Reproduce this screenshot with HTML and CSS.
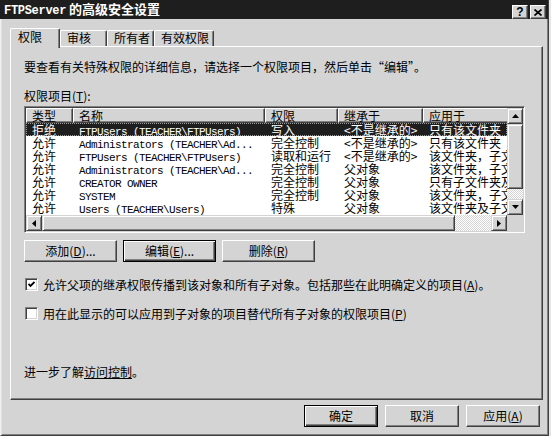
FILE: index.html
```html
<!DOCTYPE html>
<html lang="zh-CN">
<head>
<meta charset="utf-8">
<link rel="stylesheet" href="styles.css">
</head>
<body>
<div class="window">
  <div class="titlebar">
    <span class="title"><span class="title-lat">FTPServer</span> 的高级安全设置</span>
    <div class="tbtns">
      <span class="tbtn q">?</span>
      <span class="tbtn"><svg width="8" height="7" viewBox="0 0 8 7"><path d="M0.5 0.5 L7.5 6.5 M7.5 0.5 L0.5 6.5" stroke="#000" stroke-width="1.7"/></svg></span>
    </div>
  </div>

  <div class="tabs">
    <div class="tab active">权限</div>
    <div class="tab w47">审核</div>
    <div class="tab w47">所有者</div>
    <div class="tab w60">有效权限</div>
  </div>

  <div class="panel">
    <div class="intro">要查看有关特殊权限的详细信息，请选择一个权限项目，然后单击“编辑”。</div>
    <div class="label">权限项目(<u>T</u>):</div>

    <div class="listbox">
      <div class="lv-main">
        <div class="hdr">
          <div class="hc">类型</div>
          <div class="hc">名称</div>
          <div class="hc">权限</div>
          <div class="hc">继承于</div>
          <div class="hc">应用于</div>
        </div>
        <div class="rows">
          <div class="row sel"><div>拒绝</div><div><span class="mono">FTPUsers (TEACHER\FTPUsers)</span></div><div>写入</div><div>&lt;不是继承的&gt;</div><div>只有该文件夹</div></div>
          <div class="row"><div>允许</div><div><span class="mono">Administrators (TEACHER\Ad...</span></div><div>完全控制</div><div>&lt;不是继承的&gt;</div><div>只有该文件夹</div></div>
          <div class="row"><div>允许</div><div><span class="mono">FTPUsers (TEACHER\FTPUsers)</span></div><div>读取和运行</div><div>&lt;不是继承的&gt;</div><div>该文件夹，子文件夹及文件</div></div>
          <div class="row"><div>允许</div><div><span class="mono">Administrators (TEACHER\Ad...</span></div><div>完全控制</div><div>父对象</div><div>该文件夹，子文件夹及文件</div></div>
          <div class="row"><div>允许</div><div><span class="mono">CREATOR OWNER</span></div><div>完全控制</div><div>父对象</div><div>只有子文件夹及文件</div></div>
          <div class="row"><div>允许</div><div><span class="mono">SYSTEM</span></div><div>完全控制</div><div>父对象</div><div>该文件夹，子文件夹及文件</div></div>
          <div class="row"><div>允许</div><div><span class="mono">Users (TEACHER\Users)</span></div><div>特殊</div><div>父对象</div><div>该文件夹及子文件夹</div></div>
          <div class="row"><div>允许</div><div><span class="mono">Users (TEACHER\Users)</span></div><div>读取和运行</div><div>父对象</div><div>该文件夹，子文件夹及文件</div></div>
        </div>
      </div>
      <div class="vscroll">
        <div class="sbtn"><svg width="7" height="4" viewBox="0 0 7 4"><polygon points="0,4 3.5,0 7,4" fill="#000"/></svg></div>
        <div class="vthumb"></div>
        <div class="track"></div>
        <div class="sbtn"><svg width="7" height="4" viewBox="0 0 7 4"><polygon points="0,0 7,0 3.5,4" fill="#000"/></svg></div>
      </div>
      <div class="hscroll">
        <div class="sbtn"><svg width="4" height="7" viewBox="0 0 4 7"><polygon points="4,0 4,7 0,3.5" fill="#000"/></svg></div>
        <div class="hthumb"></div>
        <div class="track"></div>
        <div class="sbtn"><svg width="4" height="7" viewBox="0 0 4 7"><polygon points="0,0 4,3.5 0,7" fill="#000"/></svg></div>
      </div>
      <div class="corner"></div>
    </div>

    <div class="btnrow">
      <div class="btn w93">添加(<u>D</u>)...</div>
      <div class="btn w93 default">编辑(<u>E</u>)...</div>
      <div class="btn w93">删除(<u>R</u>)</div>
    </div>

    <div class="check first">
      <span class="box"><svg width="7" height="7" viewBox="0 0 7 7"><polyline points="0.5,3 2.5,5 6.5,1" fill="none" stroke="#000" stroke-width="1.8"/></svg></span>
      <span>允许父项的继承权限传播到该对象和所有子对象。包括那些在此明确定义的项目(<u>A</u>)。</span>
    </div>
    <div class="check second">
      <span class="box"></span>
      <span>用在此显示的可以应用到子对象的项目替代所有子对象的权限项目(<u>P</u>)</span>
    </div>

    <div class="more">进一步了解<u>访问控制</u>。</div>
  </div>

  <div class="footer">
    <div class="btn w74 default">确定</div>
    <div class="btn w74">取消</div>
    <div class="btn w74">应用(<u>A</u>)</div>
  </div>
</div>
</body>
</html>
```

FILE: styles.css
```css
* { box-sizing: border-box; }
html, body { margin: 0; padding: 0; }
body {
  width: 551px;
  height: 436px;
  overflow: hidden;
  background: #e6e6e6;
  font-family: "Noto Sans CJK SC", "Liberation Sans", sans-serif;
  font-size: 12px;
  color: #000;
}
.window {
  width: 549px;
  height: 436px;
  background: #d4d4d4;
  border-left: 1px solid #f0f0f0;
  border-right: 1px solid #404040;
  border-bottom: 1px solid #404040;
  box-shadow: inset 1px 0 #e0e0e0, inset -1px -1px #808080;
  display: flex;
  flex-direction: column;
}
.titlebar {
  height: 19px;
  margin-left: -1px;
  background: #1e1e1e;
  color: #fff;
  display: flex;
  align-items: center;
  justify-content: space-between;
  padding: 1px 2px 0 4px;
}
.title {
  font-weight: bold;
  font-size: 13px;
  line-height: 16px;
  white-space: nowrap;
}
.title-lat {
  font-family: "Liberation Mono", monospace;
  font-size: 12px;
  letter-spacing: -0.3px;
}
.tbtns { display: flex; gap: 2px; margin-top: 4px; }
.tbtn {
  width: 16px;
  height: 14px;
  background: #d4d4d4;
  border: 1px solid;
  border-color: #fff #404040 #404040 #fff;
  box-shadow: inset -1px -1px #808080;
  display: flex;
  align-items: center;
  justify-content: center;
  color: #000;
}
.tbtn.q {
  font-family: "Liberation Sans", sans-serif;
  font-weight: bold;
  font-size: 12px;
  line-height: 12px;
}

.tabs {
  display: flex;
  align-items: flex-start;
  height: 18px;
  margin-top: 9px;
  padding-left: 9px;
  position: relative;
  z-index: 1;
}
.tab {
  height: 16px;
  margin-top: 2px;
  padding-left: 6px;
  line-height: 14px;
  background: #d4d4d4;
  border-top: 1px solid #fff;
  border-left: 1px solid #fff;
  border-right: 1px solid #404040;
  box-shadow: inset -1px 0 #808080;
  border-radius: 2px 2px 0 0;
  white-space: nowrap;
}
.tab.active {
  width: 50px;
  height: 20px;
  margin-top: 0;
  padding-left: 7px;
  line-height: 16px;
}
.w47 { width: 47px; }
.w60 { width: 60px; }

.panel {
  height: 354px;
  margin: 0 5px 0 9px;
  border: 1px solid;
  border-color: #fff #404040 #404040 #fff;
  box-shadow: inset -1px -1px #808080;
  padding-left: 13px;
  display: flex;
  flex-direction: column;
  align-items: flex-start;
}
.intro { margin-top: 12px; line-height: 16px; white-space: nowrap; }
.label { margin-top: 13px; line-height: 16px; }

.listbox {
  margin-top: 2px;
  width: 501px;
  height: 127px;
  border: 1px solid;
  border-color: #808080 #fff #fff #808080;
  box-shadow: inset 1px 1px #404040, inset -1px -1px #d4d4d4;
  padding: 1px;
  display: grid;
  grid-template-columns: 481px 16px;
  grid-template-rows: 107px 16px;
  background: #fff;
}
.lv-main { overflow: hidden; display: flex; flex-direction: column; }
.hdr, .row {
  display: grid;
  grid-template-columns: 47px 192px 73px 85px 180px;
  white-space: nowrap;
}
.hdr { height: 15px; flex: none; }
.hc {
  background: #d4d4d4;
  border-top: 1px solid #fff;
  border-left: 1px solid #fff;
  border-right: 1px solid #404040;
  border-bottom: 1px solid #404040;
  box-shadow: inset -1px -1px #808080;
  padding-left: 5px;
  line-height: 13px;
}
.rows { height: 92px; overflow: hidden; }
.row { height: 13px; line-height: 13px; }
.row > div { padding-left: 6px; }
.row.sel {
  background: #1e1e1e;
  color: #fff;
  outline: 1px dotted #9a9a9a;
  outline-offset: -1px;
}
.mono {
  font-family: "Liberation Mono", monospace;
  font-size: 11px;
  letter-spacing: -0.6px;
}

.vscroll { display: flex; flex-direction: column; background: #d4d4d4; }
.hscroll { display: flex; background: #d4d4d4; }
.sbtn {
  width: 16px;
  height: 16px;
  flex: none;
  background: #d4d4d4;
  border: 1px solid;
  border-color: #d4d4d4 #404040 #404040 #d4d4d4;
  box-shadow: inset 1px 1px #fff, inset -1px -1px #808080;
  display: flex;
  align-items: center;
  justify-content: center;
}
.vthumb, .hthumb {
  background: #d4d4d4;
  border: 1px solid;
  border-color: #d4d4d4 #404040 #404040 #d4d4d4;
  box-shadow: inset 1px 1px #fff, inset -1px -1px #808080;
  flex: none;
}
.vthumb { height: 65px; }
.hthumb { width: 413px; }
.track {
  flex: 1;
  background-image: repeating-conic-gradient(#fff 0 25%, #d4d4d4 0 50%);
  background-size: 2px 2px;
}
.corner { background: #d4d4d4; }

.btnrow { display: flex; gap: 6px; margin-top: 7px; }
.btn {
  height: 22px;
  background: #d4d4d4;
  border: 1px solid;
  border-color: #fff #404040 #404040 #fff;
  box-shadow: inset -1px -1px #808080;
  display: flex;
  align-items: center;
  justify-content: center;
  white-space: nowrap;
  line-height: 16px;
}
.btn.default {
  border-color: #000;
  box-shadow: inset 1px 1px #fff, inset -1px -1px #404040, inset -2px -2px #808080;
}
.w93 { width: 93px; }
.w74 { width: 74px; }

.check {
  display: flex;
  align-items: center;
  gap: 5px;
  height: 16px;
  white-space: nowrap;
}
.check.first { margin-top: 14px; margin-left: 1px; }
.check.second { margin-top: 13px; margin-left: 1px; }
.box {
  width: 13px;
  height: 13px;
  flex: none;
  background: #fff;
  border: 1px solid;
  border-color: #808080 #fff #fff #808080;
  box-shadow: inset 1px 1px #404040, inset -1px -1px #d4d4d4;
  display: flex;
  align-items: center;
  justify-content: center;
}
.more { margin-top: 43px; line-height: 16px; }

.footer {
  display: flex;
  justify-content: flex-end;
  gap: 7px;
  margin-top: 5px;
  padding-right: 8px;
}
```
